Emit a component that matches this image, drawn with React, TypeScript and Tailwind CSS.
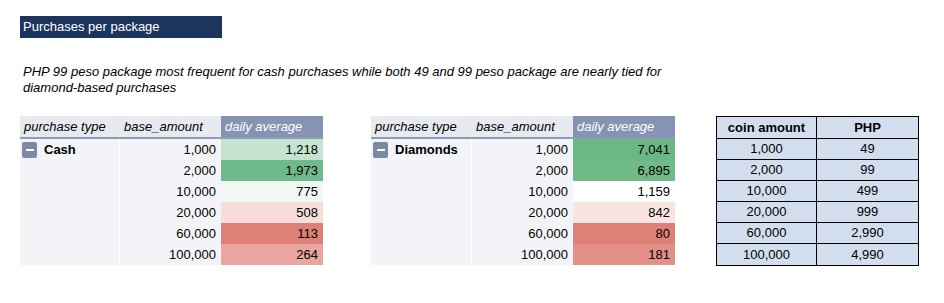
import React from "react";

const cash = [
  ["1,000", "1,218", "#c4e4d0"],
  ["2,000", "1,973", "#6fba8a"],
  ["10,000", "775", "#f1f8f3"],
  ["20,000", "508", "#f8dcd9"],
  ["60,000", "113", "#de8075"],
  ["100,000", "264", "#e9a69e"],
];
const diamonds = [
  ["1,000", "7,041", "#6bb886"],
  ["2,000", "6,895", "#70ba8a"],
  ["10,000", "1,159", "#ffffff"],
  ["20,000", "842", "#fae4e2"],
  ["60,000", "80", "#de8074"],
  ["100,000", "181", "#e39188"],
];
const php = [
  ["1,000", "49"],
  ["2,000", "99"],
  ["10,000", "499"],
  ["20,000", "999"],
  ["60,000", "2,990"],
  ["100,000", "4,990"],
];

function Pivot({ label, rows, w1, w2, w3 }: { label: string; rows: string[][]; w1: string; w2: string; w3: string }) {
  return (
    <div className="flex flex-col text-[13px] text-black">
      <div className="flex h-[23px] border-b-2 border-[#8f9cb8]">
        <div className={`${w1} bg-[#e8eaef] italic pl-[4px] flex items-center`}>purchase type</div>
        <div className={`${w2} bg-[#e8eaef] italic pl-[4px] flex items-center`}>base_amount</div>
        <div className={`${w3} bg-[#8693b3] italic text-white pl-[4px] flex items-center`}>daily average</div>
      </div>
      <div className="flex">
        <div className={`${w1} bg-[#f3f4f7] border-r border-white pt-[3px] pl-[2px]`}>
          <div className="flex items-center gap-[7px] h-[16px]">
            <div className="w-[15px] h-[16px] rounded-[2px] bg-[#7c89a3] flex items-center justify-center">
              <div className="w-[8px] h-[2px] bg-white" />
            </div>
            <span className="font-bold">{label}</span>
          </div>
        </div>
        <div className="flex flex-col">
          {rows.map((r) => (
            <div key={r[0]} className="flex h-[21px]">
              <div className={`${w2} bg-[#f3f4f7] text-right pr-[5px] flex items-center justify-end`}>{r[0]}</div>
              <div className={`${w3} text-right pr-[5px] flex items-center justify-end`} style={{ backgroundColor: r[2] }}>
                {r[1]}
              </div>
            </div>
          ))}
        </div>
      </div>
    </div>
  );
}

export default function App() {
  return (
    <div className="w-[944px] h-[303px] bg-white pl-[20px] pt-[16px]" style={{ fontFamily: '"Liberation Sans", Arial, sans-serif' }}>
      <div className="w-[202px] h-[22px] bg-[#1c355e] text-white text-[13px] pl-[3px] flex items-center">Purchases per package</div>
      <p className="italic text-[13px] leading-[16px] text-black mt-[26px] pl-[3px] w-[680px]">
        PHP 99 peso package most frequent for cash purchases while both 49 and 99 peso package are nearly tied for
        <br />
        diamond-based purchases
      </p>
      <div className="flex items-start mt-[20px]">
        <Pivot label="Cash" rows={cash} w1="w-[100px]" w2="w-[101px]" w3="w-[102px]" />
        <div className="ml-[48px]">
          <Pivot label="Diamonds" rows={diamonds} w1="w-[101px]" w2="w-[101px]" w3="w-[102px]" />
        </div>
        <div className="ml-[41px] border border-black bg-[#d2deee] text-[13px] text-black">
          <div className="flex h-[22px] border-b border-black font-bold">
            <div className="w-[100px] border-r border-black flex items-center justify-center">coin amount</div>
            <div className="w-[101px] flex items-center justify-center">PHP</div>
          </div>
          {php.map((r, i) => (
            <div key={r[0]} className={`flex h-[21px] ${i < php.length - 1 ? "border-b border-black" : ""}`}>
              <div className="w-[100px] border-r border-black flex items-center justify-center">{r[0]}</div>
              <div className="w-[101px] flex items-center justify-center">{r[1]}</div>
            </div>
          ))}
        </div>
      </div>
    </div>
  );
}
